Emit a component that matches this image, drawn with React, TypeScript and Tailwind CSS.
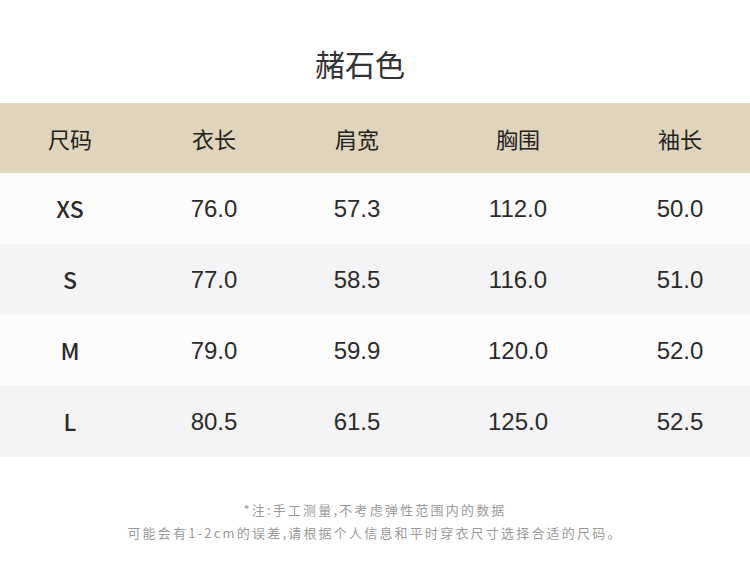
const headers = ['尺码', '衣长', '肩宽', '胸围', '袖长']

const rows = [
  ['XS', '76.0', '57.3', '112.0', '50.0'],
  ['S', '77.0', '58.5', '116.0', '51.0'],
  ['M', '79.0', '59.9', '120.0', '52.0'],
  ['L', '80.5', '61.5', '125.0', '52.5'],
]

const cjk = '"Noto Sans CJK SC", "Noto Sans", sans-serif'
const num = '"Liberation Sans", "Noto Sans CJK SC", sans-serif'

export default function App() {
  return (
    <div className="w-[750px] h-[579px] bg-white overflow-hidden" style={{ fontFamily: cjk }}>
      {/* Title */}
      <div className="h-[103px] pt-[45px] pr-[30px] text-center text-[30px] leading-[36px] text-[#333333]">
        赭石色
      </div>

      {/* Header */}
      <div className="grid grid-cols-[140px_148px_138px_184px_140px] h-[70px] items-center bg-[#e0d4bd] text-[22px] text-[#222222]">
        {headers.map((h) => (
          <div key={h} className="text-center">{h}</div>
        ))}
      </div>

      {/* Rows */}
      {rows.map((r, i) => (
        <div
          key={r[0]}
          className={`grid grid-cols-[140px_148px_138px_184px_140px] h-[71px] items-center text-[24px] text-[#2b2b2b] ${
            i % 2 === 0 ? 'bg-[#fdfcfd]' : 'bg-[#f4f3f5]'
          }`}
          style={{ fontFamily: num }}
        >
          {r.map((c, j) =>
            j === 0 ? (
              <div key={j} className="text-center font-medium text-[23px]" style={{ fontFamily: cjk }}>
                {c}
              </div>
            ) : (
              <div key={j} className="text-center">{c}</div>
            )
          )}
        </div>
      ))}

      {/* Note */}
      <div className="mt-[41px] text-center text-[13px] leading-[23px] tracking-[2.2px] text-[#9a9a9a]">
        <p>*注:手工测量,不考虑弹性范围内的数据</p>
        <p>可能会有1-2cm的误差,请根据个人信息和平时穿衣尺寸选择合适的尺码。</p>
      </div>
    </div>
  )
}
